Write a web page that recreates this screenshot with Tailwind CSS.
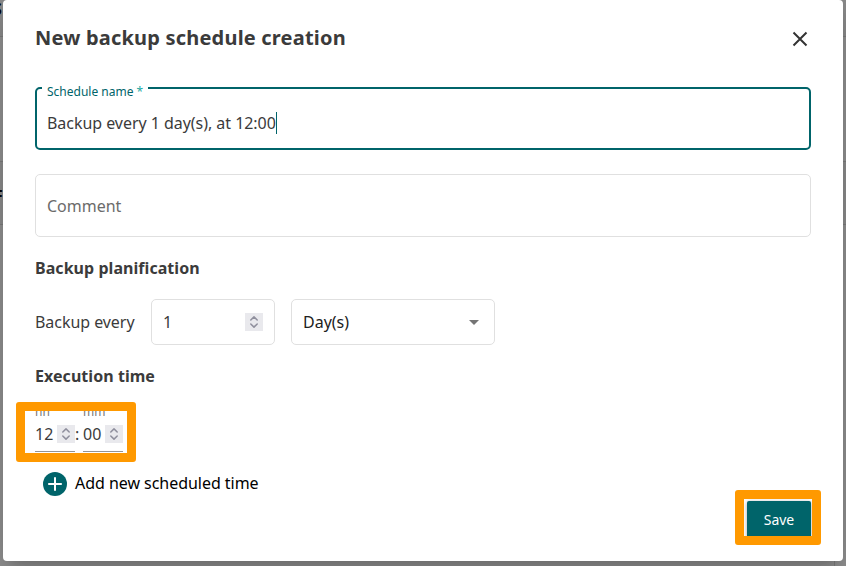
<!DOCTYPE html>
<html lang="en">
<head>
<meta charset="utf-8">
<title>New backup schedule creation</title>
<script src="https://cdn.jsdelivr.net/npm/@tailwindcss/browser@4"></script>
</head>
<body class="relative h-[566px] w-[846px] overflow-hidden bg-[#909090] font-['Noto_Sans',sans-serif] text-base text-[#3b3b3b]">
  <svg class="hidden">
    <symbol id="spin" viewBox="0 0 18 18"><path d="M5.8 7 9 3.9 12.2 7M5.8 11 9 14.1 12.2 11" fill="none" stroke="#8f8f9d" stroke-width="1.5" stroke-linecap="round" stroke-linejoin="round"/></symbol>
  </svg>
  <!-- page behind the dialog -->
  <div class="absolute inset-x-0 top-0 h-[37px] border-b border-[#7c7c7c] bg-[#8b8b8b]"></div>
  <div class="absolute inset-x-0 top-[161px] h-[64px] border-y border-[#7c7c7c] bg-[#8b8b8b]"></div>
  <span class="absolute -left-[7px] top-0 text-base leading-[18px] font-bold text-black">S</span>
  <span class="absolute -left-[6px] top-[187px] text-base leading-[18px] font-bold text-black">F</span>
  <div class="absolute bottom-0 left-[834px] h-[5px] w-px bg-[#7c7c7c]"></div>

  <main class="relative mx-[3px] flex h-[561px] flex-col rounded-[4px] bg-white px-8 shadow-[0_11px_15px_-7px_rgba(0,0,0,0.2),0_9px_46px_8px_rgba(0,0,0,0.12)]">
    <header class="flex h-[76px] items-center justify-between">
      <h1 class="text-xl leading-6 font-bold tracking-[0.2px]">New backup schedule creation</h1>
      <svg class="mt-[2px] mr-[3px] size-4" viewBox="0 0 16 16"><path d="M1.5 1.5 14.5 14.5M14.5 1.5 1.5 14.5" stroke="#333" stroke-width="2" fill="none"/></svg>
    </header>

    <div class="relative mt-[11px] flex h-[63px] items-center rounded-[5px] border-2 border-[#00646a] px-[10px] pt-[8px]">
      <label class="absolute -top-[5px] left-[5px] bg-white pr-[5px] pl-[5px] text-xs leading-4 text-[#00646a]">Schedule name <span class="text-[#1ba9a5]">*</span></label>
      <span class="tracking-[-0.04px]">Backup every 1 day(s), at 12:00</span><i class="h-[22px] w-px bg-[#00646a]"></i>
    </div>

    <div class="mt-6 flex h-[63px] items-center rounded-[5px] border border-[#e0e0e0] px-[11px] text-[#6b6b6b]">Comment</div>

    <h2 class="mt-[19px] leading-6 font-bold tracking-[0.05px]">Backup planification</h2>

    <div class="mt-[19px] flex h-[46px] items-center">
      <span class="w-[116px] tracking-[-0.05px]">Backup every</span>
      <div class="flex h-full w-[124px] items-center justify-between rounded-[5px] border border-[#e0e0e0] px-[11px]">
        <span>1</span>
        <svg class="size-[18px] bg-[#e9e9ed]"><use href="#spin"/></svg>
      </div>
      <div class="ml-4 flex h-full w-[204px] items-center justify-between rounded-[5px] border border-[#e0e0e0] pr-[15px] pl-[11px] text-[#212121]">
        <span>Day(s)</span>
        <svg class="h-[5px] w-[10px]" viewBox="0 0 10 5"><path d="M0 0H10L5 5Z" fill="#757575"/></svg>
      </div>
    </div>

    <h2 class="mt-[19px] leading-6 font-bold tracking-[0.05px]">Execution time</h2>

    <div class="mt-[15px] flex h-[50px]">
      <div class="w-10">
        <div class="h-[14px] text-xs leading-[18px] text-[#757575]">hh</div>
        <div class="mt-px flex h-[34px] items-center justify-between border-b border-[#949494] pb-px"><span>12</span><svg class="size-[18px] bg-[#e9e9ed]"><use href="#spin"/></svg></div>
      </div>
      <span class="mt-[19px] w-2 leading-[24px]">:</span>
      <div class="w-10">
        <div class="h-[14px] text-xs leading-[18px] text-[#757575]">mm</div>
        <div class="mt-px flex h-[34px] items-center justify-between border-b border-[#949494] pb-px"><span>00</span><svg class="size-[18px] bg-[#e9e9ed]"><use href="#spin"/></svg></div>
      </div>
    </div>

    <div class="mt-[19px] ml-2 flex h-6 items-center gap-2 text-black">
      <svg class="size-6" viewBox="0 0 24 24"><circle cx="12" cy="12" r="12" fill="#00646a"/><path d="M12 5.2V18.8M5.2 12H18.8" stroke="#fff" stroke-width="2"/></svg>
      <span class="-mt-[2px] tracking-[-0.04px]">Add new scheduled time</span>
    </div>

    <button class="mt-[5px] h-[37px] w-16 self-end rounded-[2px] bg-[#00646a] text-sm text-white shadow-[0_1px_4px_rgba(0,0,0,0.35)]">Save</button>
  </main>

  <!-- highlight frames -->
  <div class="absolute top-[402px] left-4 h-[60px] w-[120px] rounded-[3px] border-9 border-[#ff9900]"></div>
  <div class="absolute top-[490px] left-[735px] h-[55px] w-[86px] rounded-[3px] border-9 border-[#ff9900]"></div>
</body>
</html>
